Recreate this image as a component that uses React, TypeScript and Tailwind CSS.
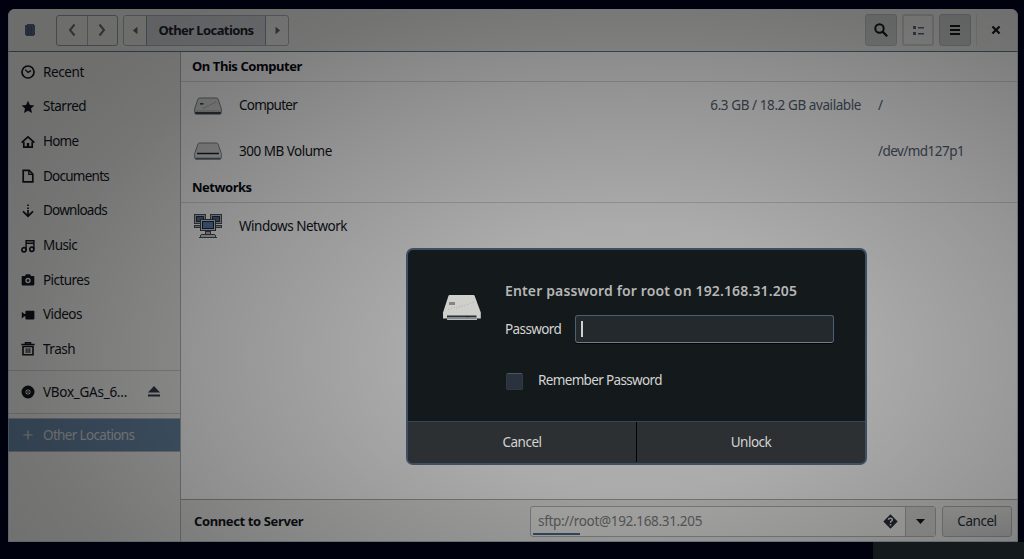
import type { ReactNode } from "react";

const ink = "#12161c";

function Icon({ children, size = 14, className = "" }: { children: ReactNode; size?: number; className?: string }) {
  return (
    <svg width={size} height={size} viewBox="0 0 14 14" fill="none" stroke="currentColor" strokeWidth="1.7" className={`shrink-0 ${className}`}>
      {children}
    </svg>
  );
}

const places: { label: string; track: string; icon: ReactNode }[] = [
  {
    label: "Recent",
    track: "tracking-[-0.4px]",
    icon: (
      <>
        <circle cx="7" cy="7" r="6" />
        <path d="M4.2 4.6 7 7.4 10 5.6" strokeWidth="1.3" />
      </>
    ),
  },
  {
    label: "Starred",
    track: "tracking-[-0.5px]",
    icon: <path d="M7 .8 8.9 5.1 13.4 5.5 10 8.5 11 13 7 10.7 3 13 4 8.5.6 5.5 5.1 5.1Z" fill="currentColor" stroke="none" />,
  },
  {
    label: "Home",
    track: "tracking-[-0.8px]",
    icon: (
      <>
        <path d="M.5 7.6 7 1.8 13.5 7.6" />
        <path d="M2.8 6.8V12.2H11.2V6.8" />
        <path d="M7 8V12" strokeWidth="2.4" />
      </>
    ),
  },
  {
    label: "Documents",
    track: "tracking-[-0.75px]",
    icon: (
      <>
        <path d="M2.2 1.4H8.2L11.8 5V12.9H2.2Z" />
        <path d="M7.8 1.4V5.4H11.8" strokeWidth="1.3" />
      </>
    ),
  },
  {
    label: "Downloads",
    track: "tracking-[-0.75px]",
    icon: (
      <>
        <path d="M7 .5V2M7 3.5V5M7 6V12" />
        <path d="M2 7.4 7 12.2 12 7.4" />
      </>
    ),
  },
  {
    label: "Music",
    track: "tracking-[-0.6px]",
    icon: (
      <>
        <circle cx="3" cy="10.8" r="2.1" />
        <circle cx="10.8" cy="10.3" r="2.1" />
        <path d="M5.1 10.8V1.7H12.9V10.3M5.1 4.2H12.9" strokeWidth="1.4" />
      </>
    ),
  },
  {
    label: "Pictures",
    track: "tracking-[-0.55px]",
    icon: (
      <>
        <path d="M1.5 3H4L5 1.3H9L10 3H12.5Q13.3 3 13.3 3.9V11.6Q13.3 12.4 12.5 12.4H1.5Q.7 12.4.7 11.6V3.9Q.7 3 1.5 3Z" fill="currentColor" stroke="none" />
        <circle cx="7" cy="7.5" r="2.7" fill="#e8e8e7" stroke="none" />
        <circle cx="7" cy="7.5" r="1.3" fill="currentColor" stroke="none" />
      </>
    ),
  },
  {
    label: "Videos",
    track: "tracking-[-0.55px]",
    icon: <path d="M5.2 2.8H12.6Q13.4 2.8 13.4 3.6V10.6Q13.4 11.4 12.6 11.4H5.2Q4.4 11.4 4.4 10.6V8.3H3.4L.8 10.4V3.8L3.4 5.9H4.4V3.6Q4.4 2.8 5.2 2.8Z" fill="currentColor" stroke="none" />,
  },
  {
    label: "Trash",
    track: "tracking-[-0.5px]",
    icon: (
      <>
        <path d="M.3 2.6H13.7M4.5 2.2V.7H9.5V2.2" strokeWidth="1.5" />
        <path d="M2 4.5V12.8H12V4.5Z" strokeWidth="1.6" />
        <path d="M5.2 6.3V11M7 6.3V11M8.8 6.3V11" strokeWidth="1" />
      </>
    ),
  },
];

function Drive({ slot = false }: { slot?: boolean }) {
  return (
    <svg width="28" height="18" viewBox="0 0 28 18" className="mt-px shrink-0">
      <path d="M5.6 1H22.4Q23.6 1 24 2L27.3 11.5V15.7Q27.3 17.2 25.8 17.2H2.2Q.7 17.2.7 15.7V11.5L4 2Q4.4 1 5.6 1Z" fill="#d6d7d5" stroke="#7b8187" strokeWidth="1" />
      {slot ? (
        <>
          <path d="M1.5 10.5H26.5V15H1.5Z" fill="#dfe0df" />
          <path d="M3 11.5H25" stroke="#1b2027" strokeWidth="1.3" />
          <path d="M1.5 16.4H26.5" stroke="#5c6a7a" strokeWidth="1.5" />
        </>
      ) : (
        <>
          <rect x="6" y="6" width="3.5" height="1.6" fill="#3f4954" />
          <path d="M9 11.5 15 8.5M16 8 22 5" stroke="#8799ae" strokeWidth="1" strokeDasharray="1.5 1" />
          <path d="M1.6 14H26.4" stroke="#a8acae" strokeWidth="1" />
          <path d="M1.2 16H26.8" stroke="#3b444d" strokeWidth="2" />
        </>
      )}
    </svg>
  );
}

function NetworkIcon() {
  return (
    <svg width="28" height="26" viewBox="0 0 28 26" className="shrink-0" shapeRendering="crispEdges">
      {[0.5, 16.5].map((x) => (
        <g key={x}>
          <rect x={x} y="1.5" width="11" height="9" fill="#b9bcbd" stroke="#46505b" />
          <rect x={x + 2} y="3.5" width="7" height="5" fill="#4d6b93" stroke="#27313f" />
          <rect x={x} y="12" width="11" height="2" fill="#adb0b0" stroke="#46505b" />
        </g>
      ))}
      <rect x="6.5" y="6.5" width="15" height="11" fill="#d2d4d3" stroke="#39434e" />
      <rect x="8.5" y="8.5" width="11" height="7" fill="#5c80b3" stroke="#1c2634" />
      <rect x="11.5" y="18" width="5" height="3" fill="#b6b9b9" stroke="#46505b" />
      <path d="M7.5 21.5H20.5L22.5 24.5H5.5Z" fill="#d0d2d1" stroke="#46505b" />
    </svg>
  );
}

function DialogDrive() {
  return (
    <svg width="40" height="28" viewBox="0 0 40 28" className="shrink-0">
      <path d="M7.5 1H31.5Q32.3 1 32.6 1.8L38.8 18.5V24.5H1V18.5L6.5 1.8Q6.8 1 7.5 1Z" fill="#cfd0cc" />
      <path d="M5 22.6H34.5" stroke="#22292d" strokeWidth="2" />
      <path d="M6 23.4H24M27 23.4H34" stroke="#7892a5" strokeWidth=".8" />
      <path d="M5 25.3H35" stroke="#e3e3de" strokeWidth="1" />
      <rect x="7" y="8" width="6" height="3" fill="#858680" />
      <path d="M6 15.5 21 11M14 15 33 7.5" stroke="#aeb0ab" strokeWidth="1" strokeDasharray="1 2" />
    </svg>
  );
}

function Row({ icon, label, size, path, height, track }: { icon: ReactNode; label: string; size?: string; path?: string; height: string; track: string }) {
  return (
    <div className={`flex items-center pl-[13px] ${height}`}>
      {icon}
      <span className={`ml-[17px] flex-1 ${track}`}>{label}</span>
      {size && <span className="mr-[17px] tracking-[-0.42px] text-[#536071]">{size}</span>}
      <span className="w-[140px] tracking-[-0.55px] text-[#536071]">{path}</span>
    </div>
  );
}

function Header() {
  return (
    <header className="flex h-[43px] shrink-0 items-center border-b border-[#61758b] bg-[#e7e7e6] pr-[17px] text-[#12161c]">
      <div className="flex w-12 justify-center pr-[5px]">
        <svg width="12" height="14" viewBox="0 0 12 14">
          <path d="M1 2H3V1H10V2H11V12H10V13H2V12H1Z" fill="#52677f" />
          <path d="M4 3V12M7 3V12" stroke="#3f536b" strokeWidth="1" />
        </svg>
      </div>
      <div className="flex h-[31px] w-[62px] rounded-[3px] border border-[#8b98a6] text-[#626a72]">
        <span className="flex flex-1 items-center justify-center border-r border-[#a3adb7]">
          <Icon><path d="M9.5 1.5 5 7 9.5 12.5" strokeWidth="2" /></Icon>
        </span>
        <span className="flex flex-1 items-center justify-center">
          <Icon><path d="M4.5 1.5 9 7 4.5 12.5" strokeWidth="2" /></Icon>
        </span>
      </div>
      <div className="ml-[5px] flex h-[31px] w-[166px] rounded-[3px] border border-[#a4adb6] text-[#566069]">
        <span className="flex w-[23px] items-center justify-center border-r border-[#8494a5]">
          <Icon size={9}><path d="M10 1V13L3 7Z" fill="currentColor" stroke="none" /></Icon>
        </span>
        <span className="flex flex-1 items-center justify-center border-r border-[#8494a5] bg-[#cbced1] text-[13px] font-bold tracking-[-0.58px] whitespace-nowrap text-[#1c222c]">Other Locations</span>
        <span className="flex w-[22px] items-center justify-center">
          <Icon size={9}><path d="M4 1V13L11 7Z" fill="currentColor" stroke="none" /></Icon>
        </span>
      </div>
      <div className="ml-auto flex items-center gap-[5px]">
        <span className="flex size-8 items-center justify-center rounded-[3px] border border-[#b3b7b8] bg-[#c6c9c7]">
          <Icon size={14}><circle cx="5.5" cy="5.5" r="4.2" strokeWidth="2" /><path d="M8.6 8.6 13.2 13.2" strokeWidth="2.2" /></Icon>
        </span>
        <span className="flex size-8 items-center justify-center rounded-[3px] border-2 border-[#c8cac9] text-[#566474]">
          <svg width="13" height="11" viewBox="0 0 13 11" fill="currentColor">
            <path d="M1 1H4V4H1ZM1 7H4V10H1ZM6 2H12V3.5H6ZM6 8H12V9.5H6Z" />
          </svg>
        </span>
        <span className="flex size-8 items-center justify-center rounded-[3px] border border-[#adb5bd] bg-[#c6c9c7]">
          <svg width="10" height="10" viewBox="0 0 10 10" fill={ink}><path d="M0 0H10V2H0ZM0 4H10V6H0ZM0 8H10V10H0Z" /></svg>
        </span>
        <span className="h-8 w-px bg-[#d3d5d3]" />
        <Icon size={10} className="ml-[9px]"><path d="M2 2 12 12M12 2 2 12" strokeWidth="3" /></Icon>
      </div>
    </header>
  );
}

function Sidebar() {
  return (
    <nav className="flex w-[173px] shrink-0 flex-col border-r border-[#b0b3b2] bg-[#ebebea] pt-[3px] text-[#12161c]">
      {places.map((p) => (
        <div key={p.label} className="flex h-[34.65px] items-center gap-2 pl-[13px]">
          <Icon>{p.icon}</Icon>
          <span className={`-mt-px ${p.track}`}>{p.label}</span>
        </div>
      ))}
      <div className="mt-[3px] flex h-[43px] items-center border-t border-[#c6c8c6] pl-[13px]">
        <Icon>
          <circle cx="7" cy="7" r="4.5" strokeWidth="4" />
          <circle cx="7" cy="7" r="1.3" strokeWidth="1" />
        </Icon>
        <span className="ml-2 tracking-[-0.27px]">VBox_GAs_6…</span>
        <svg width="12" height="11" viewBox="0 0 12 11" className="mr-5 ml-auto" fill="#303945"><path d="M6 0 12 6.5H0ZM0 8.5H12V10.5H0Z" /></svg>
      </div>
      <div className="h-[5px] border-t border-[#c6c8c6]" />
      <div className="flex h-[34px] items-center gap-2 border-y border-[#a9b2bb] bg-[#6684a2] pl-[13px] text-[#cdd0d2]">
        <Icon><path d="M7 2.5V11.5M2.5 7H11.5" strokeWidth="1.2" /></Icon>
        <span className="tracking-[-0.65px]">Other Locations</span>
      </div>
    </nav>
  );
}

function Dialog() {
  return (
    <div className="absolute top-[248px] left-[406px] z-20 flex h-[217px] w-[461px] flex-col overflow-hidden rounded-[7px] border-2 border-[#3f4f63] bg-[#14191c] text-[13.5px] text-[#d3d4d2]">
      <div className="flex h-[171px]">
        <div className="w-[97px] pt-[44px] pl-[34px]"><DialogDrive /></div>
        <div className="flex flex-col items-start">
          <h1 className="mt-[31px] text-[14px] leading-5 font-semibold tracking-[0.14px] whitespace-nowrap text-[#b5b7b6]">Enter password for root on 192.168.31.205</h1>
          <div className="mt-[14px] flex h-7 items-center">
            <span className="w-[70px] tracking-[-0.6px]">Password</span>
            <div className="flex h-7 w-[259px] items-center rounded-[3px] border border-[#4d5f76] border-b-[#777c80] bg-[#23292d] pl-[5px] shadow-[0_1px_0_#02050c]">
              <span className="h-4 w-0.5 bg-[#d0d1cf]" />
            </div>
          </div>
          <div className="mt-[27px] flex h-5 items-center">
            <span className="ml-px mt-[3px] size-[17px] rounded-[2px] border border-[#303a45] border-t-[#4b5765] bg-[#2a333d]" />
            <span className="ml-[15px] tracking-[-0.65px]">Remember Password</span>
          </div>
        </div>
      </div>
      <div className="flex flex-1 border-t border-[#35475c] bg-[#2c3033] pb-px">
        <span className="flex w-[229px] items-center justify-center border-r border-[#02040c] tracking-[-0.5px]">Cancel</span>
        <span className="flex flex-1 items-center justify-center tracking-[-0.5px]">Unlock</span>
      </div>
    </div>
  );
}

export default function App() {
  return (
    <div className="relative h-[559px] w-[1024px] overflow-hidden bg-[#00010f] pt-[9px] pl-2 font-['Noto_Sans','Open_Sans',sans-serif] text-[13.5px] leading-5">
      <div className="relative flex h-[533px] w-[1010px] flex-col overflow-hidden rounded-t-[7px]">
        <Header />
        <div className="flex min-h-0 flex-1">
          <Sidebar />
          <main className="flex flex-1 flex-col bg-white text-[#12161c]">
            <h2 className="h-[30px] border-b border-[#d8dad9] pt-1 pl-[11px] text-[13px] font-bold tracking-[-0.43px] text-[#080a16]">On This Computer</h2>
            <Row icon={<Drive />} label="Computer" size="6.3 GB / 18.2 GB available" path="/" height="h-[46px]" track="tracking-[-0.75px]" />
            <Row icon={<Drive slot />} label="300 MB Volume" path="/dev/md127p1" height="h-[45px]" track="tracking-[-0.5px]" />
            <h2 className="h-[30px] border-b border-[#d8dad9] pt-1 pl-[11px] text-[13px] font-bold tracking-[-0.5px] text-[#080a16]">Networks</h2>
            <Row icon={<NetworkIcon />} label="Windows Network" height="h-[46px]" track="tracking-[-0.5px]" />
            <footer className="mt-auto flex h-[43px] items-center border-t border-[#a8abab] bg-[#ebebea] pr-[6px] pl-[13px]">
              <span className="-mt-px text-[13px] font-bold tracking-[-0.38px]">Connect to Server</span>
              <div className="ml-auto flex h-[31px] w-[406px] rounded-[3px] border border-[#b0b2b1] bg-[#f2f2f0]">
                <div className="relative flex flex-1 items-center pr-[7px] pl-[7px] text-[#7d8082]">
                  <span className="-mt-px flex-1 tracking-[-0.32px]">sftp://root@192.168.31.205</span>
                  <svg width="15" height="15" viewBox="0 0 15 15">
                    <path d="M7.5.3 14.7 7.5 7.5 14.7.3 7.5Z" fill="#28303a" />
                    <path d="M5.4 5.8Q5.5 4.2 7.4 4.2T9.4 5.8Q9.4 6.8 8 7.4 7.5 7.7 7.5 8.7M7.5 10V11.5" fill="none" stroke="#e9e9e8" strokeWidth="1.5" />
                  </svg>
                  <span className="absolute bottom-[1px] left-[2px] h-0.5 w-[47px] bg-[#49698f]" />
                </div>
                <div className="flex w-[30px] items-center justify-center border-l border-[#b0b2b1] bg-[#d9dad8]">
                  <svg width="9" height="5" viewBox="0 0 9 5" fill={ink}><path d="M0 0H9L4.5 5Z" /></svg>
                </div>
              </div>
              <span className="ml-[6px] flex h-[31px] w-[70px] items-center justify-center rounded-[3px] border border-[#acafae] bg-linear-to-b from-[#e4e4e2] to-[#d2d3d2] pb-px tracking-[-0.45px] text-[#252d38]">Cancel</span>
            </footer>
          </main>
        </div>
        <div className="pointer-events-none absolute inset-0 bg-[radial-gradient(ellipse_720px_440px_at_628px_348px,rgba(0,0,0,0.30)_0%,rgba(0,0,0,0.33)_30%,rgba(0,0,0,0.42)_60%,rgba(0,0,0,0.50)_85%,rgba(0,0,0,0.53)_100%)]" />
        <div className="pointer-events-none absolute inset-0 rounded-t-[7px] border-x border-b border-[#505c69]/60" />
      </div>
      <div className="ml-[865px] h-[17px] bg-[#14191b]" />
      <Dialog />
    </div>
  );
}
